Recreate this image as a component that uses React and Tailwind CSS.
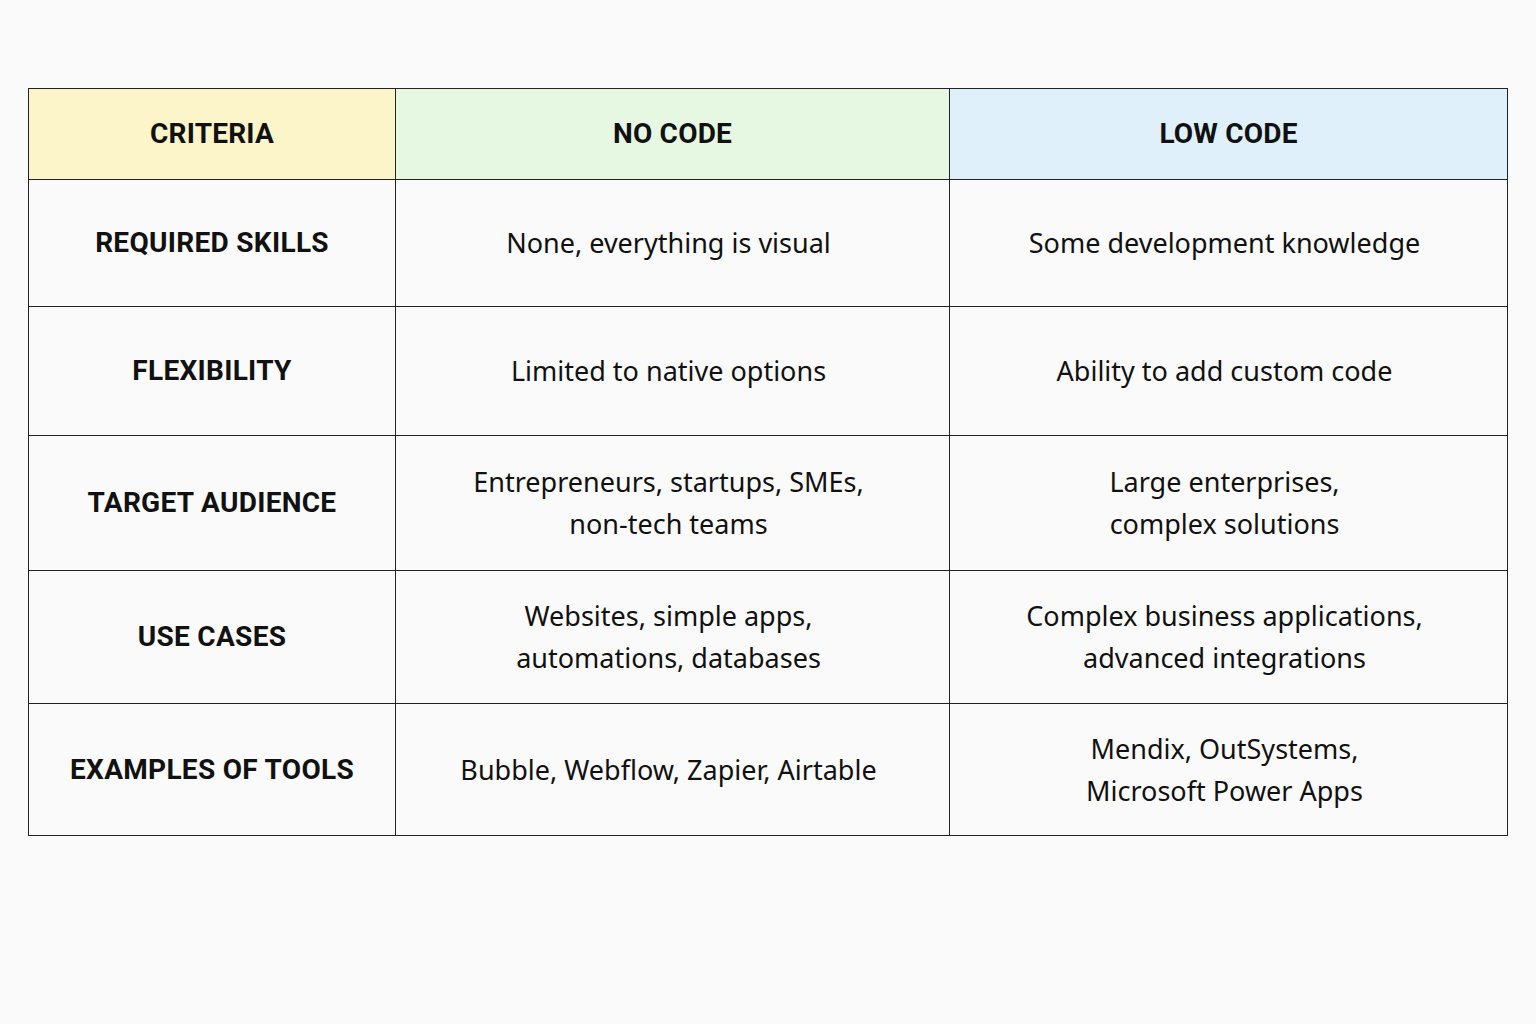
const ROWS = [
  { label: 'REQUIRED SKILLS', noCode: ['None, everything is visual'], lowCode: ['Some development knowledge'], h: 'h-[127px]' },
  { label: 'FLEXIBILITY', noCode: ['Limited to native options'], lowCode: ['Ability to add custom code'], h: 'h-[129px]' },
  { label: 'TARGET AUDIENCE', noCode: ['Entrepreneurs, startups, SMEs,', 'non-tech teams'], lowCode: ['Large enterprises,', 'complex solutions'], h: 'h-[135px]' },
  { label: 'USE CASES', noCode: ['Websites, simple apps,', 'automations, databases'], lowCode: ['Complex business applications,', 'advanced integrations'], h: 'h-[133px]' },
  { label: 'EXAMPLES OF TOOLS', noCode: ['Bubble, Webflow, Zapier, Airtable'], lowCode: ['Mendix, OutSystems,', 'Microsoft Power Apps'], h: 'h-[132px]' },
]

function Lines({ lines }) {
  return lines.map((l, i) => <div key={i}>{l}</div>)
}

export default function App() {
  return (
    <div className="min-h-[1024px] w-[1536px] bg-[#fafafa] pt-[88px] pl-[28px]">
      <table className="border-collapse w-[1479px] table-fixed text-[#111]">
        <colgroup>
          <col className="w-[367px]" />
          <col className="w-[554px]" />
          <col className="w-[558px]" />
        </colgroup>
        <thead>
          <tr className="h-[91px] font-['Roboto',sans-serif] font-bold text-[28px] tracking-[0.2px]">
            <th className="border border-[#222] bg-[#fcf5c9]">CRITERIA</th>
            <th className="border border-[#222] bg-[#e6f8e1]">NO CODE</th>
            <th className="border border-[#222] bg-[#dff0fb]">LOW CODE</th>
          </tr>
        </thead>
        <tbody>
          {ROWS.map(r => (
            <tr key={r.label} className={r.h}>
              <td className="border border-[#222] text-center font-['Roboto',sans-serif] font-bold text-[28px] tracking-[0.3px]">
                {r.label}
              </td>
              <td className="border border-[#222] text-center pr-[8px] font-['Noto_Sans',sans-serif] text-[27px] leading-[42px]">
                <Lines lines={r.noCode} />
              </td>
              <td className="border border-[#222] text-center pr-[8px] font-['Noto_Sans',sans-serif] text-[27px] leading-[42px]">
                <Lines lines={r.lowCode} />
              </td>
            </tr>
          ))}
        </tbody>
      </table>
    </div>
  )
}
